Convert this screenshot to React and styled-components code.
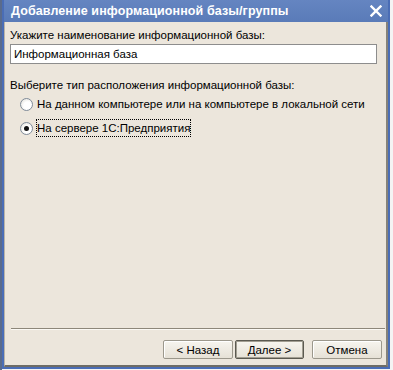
import React from 'react';
import styled, { createGlobalStyle } from 'styled-components';

const Global = createGlobalStyle`
  html, body { margin: 0; padding: 0; }
  body {
    width: 393px; height: 370px; overflow: hidden;
    background: #f4f4f4;
    font-family: "Liberation Sans", Arial, sans-serif;
  }
`;

const Screen = styled.div`
  width: 393px; height: 370px;
  box-sizing: border-box;
  padding-left: 2px;
  display: flex;
  align-items: flex-start;
  background: linear-gradient(to right, #5a6b8c 0 2px, transparent 2px);
`;

const Window = styled.div`
  width: 388px;
  height: 369px;
  box-sizing: border-box;
  display: flex;
  flex-direction: column;
  border: 2px solid #4a6db6;
  border-top: none;
  background: #5f80bd;
`;

const TitleBar = styled.div`
  height: 22px;
  flex: none;
  display: flex;
  align-items: center;
  justify-content: space-between;
  padding: 0 4px 0 7px;
  background: linear-gradient(to bottom, #6585c1, #5a7bb8);
  color: #fff;
  font-weight: bold;
  font-size: 12.5px;
`;

const Title = styled.span`
  letter-spacing: 0.1px;
`;

const Close = styled.svg`
  width: 12px; height: 12px;
  margin-right: 2px;
`;

const Body = styled.div`
  flex: 1;
  display: flex;
  flex-direction: column;
  background: #ece6dc;
  border-right: 2px solid #85827a;
  border-bottom: 2px solid #6e6c66;
  border-left: 1px solid #b9b4a8;
  padding: 6px 4px 6px 5px;
  font-size: 11.5px;
  color: #000;
`;

const Label = styled.div`
  line-height: 14px;
  white-space: nowrap;
  margin-top: ${p => p.$top || 0}px;
`;

const Input = styled.div`
  margin-top: 2px;
  margin-right: 5px;
  height: 20px;
  box-sizing: border-box;
  border: 1px solid #8d8d8d;
  background: #fff;
  padding: 0 3px;
  line-height: 18px;
`;

const RadioRow = styled.div`
  height: 24px;
  display: flex;
  align-items: center;
  padding-left: 10px;
  gap: 3px;
  white-space: nowrap;
`;

const RadioCircle = styled.span`
  width: 13px; height: 13px;
  flex: none;
  box-sizing: border-box;
  border-radius: 50%;
  border: 1px solid #7f8b99;
  background: radial-gradient(circle at 60% 60%, #ffffff 40%, #dcdad2 100%);
  display: flex;
  align-items: center;
  justify-content: center;
  &::after {
    content: "";
    width: 5px; height: 5px;
    border-radius: 50%;
    background: ${p => (p.$checked ? '#111' : 'transparent')};
  }
`;

const RadioText = styled.span`
  line-height: 14px;
  padding: 1px 0;
  border: 1px dotted ${p => (p.$focused ? '#000' : 'transparent')};
`;

const Separator = styled.div`
  margin-top: auto;
  margin-left: 1px;
  margin-right: -3px;
  height: 1px;
  background: #8d877a;
  box-shadow: 0 1px 0 #fbf9f4;
`;

const ButtonRow = styled.div`
  margin-top: 11px;
  display: flex;
  justify-content: flex-end;
`;

const Button = styled.button`
  width: ${p => p.$w}px;
  height: 19px;
  margin-left: ${p => p.$gap}px;
  box-sizing: border-box;
  padding: 0;
  font-family: "Liberation Sans", Arial, sans-serif;
  font-size: 11.5px;
  color: #000;
  border-radius: 2px;
  border: 1px solid ${p => (p.$default ? '#5b5950' : '#9c988c')};
  box-shadow: ${p => (p.$default ? 'inset 0 0 0 1px #a29e92' : 'inset 1px 1px 0 #fff')};
  background: linear-gradient(to bottom, #f7f5ef, #e6e1d6);
  line-height: 16px;
`;

export default function App() {
  return (
    <>
      <Global />
      <Screen>
        <Window>
          <TitleBar>
            <Title>Добавление информационной базы/группы</Title>
            <Close viewBox="0 0 12 12">
              <path d="M1.5 1.5 L10.5 10.5 M10.5 1.5 L1.5 10.5" stroke="#fff" strokeWidth="2.4" strokeLinecap="square" />
            </Close>
          </TitleBar>
          <Body>
            <Label>Укажите наименование информационной базы:</Label>
            <Input>Информационная база</Input>
            <Label $top={14}>Выберите тип расположения информационной базы:</Label>
            <RadioRow>
              <RadioCircle />
              <RadioText>На данном компьютере или на компьютере в локальной сети</RadioText>
            </RadioRow>
            <RadioRow>
              <RadioCircle $checked />
              <RadioText $focused>На сервере 1С:Предприятия</RadioText>
            </RadioRow>
            <Separator />
            <ButtonRow>
              <Button $w={70} $gap={0}>&lt; Назад</Button>
              <Button $w={69} $gap={2} $default>Далее &gt;</Button>
              <Button $w={70} $gap={8}>Отмена</Button>
            </ButtonRow>
          </Body>
        </Window>
      </Screen>
    </>
  );
}
